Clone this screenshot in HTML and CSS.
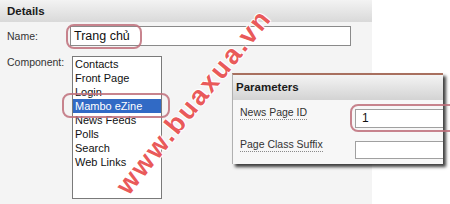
FILE: index.html
```html
<!DOCTYPE html>
<html>
<head>
<meta charset="utf-8">
<link rel="stylesheet" href="styles.css">
</head>
<body>
<div class="page">
  <section class="details">
    <div class="hdr">Details</div>
    <div class="form">
      <div class="lbl lbl-name">Name:</div>
      <div class="name-input">Trang chủ</div>
      <div class="lbl lbl-comp">Component:</div>
      <ul class="listbox">
        <li>Contacts</li>
        <li>Front Page</li>
        <li>Login</li>
        <li class="sel">Mambo eZine</li>
        <li>News Feeds</li>
        <li>Polls</li>
        <li>Search</li>
        <li>Web Links</li>
      </ul>
    </div>
  </section>

  <section class="params">
    <div class="phdr">Parameters</div>
    <div class="pbody">
      <div class="prow">
        <div class="plbl"><span>News Page ID</span></div>
        <div class="pinput tall">1</div>
      </div>
      <div class="prow">
        <div class="plbl"><span>Page Class Suffix</span></div>
        <div class="pinput"></div>
      </div>
    </div>
  </section>

  <div class="hl hl-name"></div>
  <div class="hl hl-mambo"></div>
  <div class="hl hl-param"></div>

  <div class="watermark">www.buaxua.vn</div>
</div>
</body>
</html>
```

FILE: styles.css
```css
* { box-sizing: border-box; }

html, body {
  margin: 0;
  padding: 0;
  background: #ffffff;
}

.page {
  position: relative;
  width: 450px;
  height: 204px;
  overflow: hidden;
  font-family: "Liberation Sans", Arial, sans-serif;
  color: #222;
}

.details {
  width: 372px;
  height: 204px;
  background: #f4f4f4;
}

.hdr {
  height: 22px;
  line-height: 22px;
  padding-left: 7px;
  font-size: 11.5px;
  font-weight: bold;
  color: #1a1a1a;
  background: linear-gradient(#f3f3f3, #d9d9d9);
}

.form {
  display: grid;
  grid-template-columns: 70px auto;
  row-gap: 10px;
  padding-top: 4px;
  align-items: start;
}

.lbl {
  padding-left: 7px;
  font-size: 10.5px;
  color: #333;
}

.lbl-name { line-height: 20px; }
.lbl-comp { line-height: 13px; }

.name-input {
  width: 281px;
  height: 20px;
  border: 1px solid #8a8a8a;
  background: #fff;
  font-size: 12.5px;
  line-height: 18px;
  padding-left: 3px;
  color: #111;
}

.listbox {
  list-style: none;
  margin: 0 0 0 2px;
  padding: 0;
  width: 90px;
  height: 143px;
  border: 1px solid #7a7a7a;
  background: #fff;
}

.listbox li {
  height: 14px;
  line-height: 14px;
  padding-left: 2px;
  font-size: 11px;
  color: #111;
  white-space: nowrap;
}

.listbox li.sel {
  background: #316ac5;
  color: #fff;
}

.params {
  position: absolute;
  left: 232px;
  top: 73px;
  width: 211px;
  height: 91px;
  background: #f7f7f7;
  border-top: 2px solid #a8705f;
  border-left: 1px solid #b0b0b0;
  box-shadow: 3px 3px 3px rgba(0, 0, 0, 0.75);
  overflow: hidden;
}

.phdr {
  height: 25px;
  line-height: 25px;
  padding-left: 3px;
  font-size: 11.5px;
  font-weight: bold;
  color: #1a1a1a;
  background: linear-gradient(#f4f4f4, #d3d3d3);
}

.pbody {
  padding-top: 6px;
}

.prow {
  display: grid;
  grid-template-columns: 122px 1fr;
  height: 32px;
  align-items: start;
}

.plbl {
  display: flex;
  padding-left: 7px;
}

.plbl span {
  display: block;
  font-size: 10.5px;
  line-height: 13px;
  color: #333;
  border-bottom: 1px dotted #8a8a8a;
}

.pinput {
  margin-top: 3px;
  height: 18px;
  border: 1px solid #a0a0a0;
  border-right: none;
  background: #fff;
  font-size: 12px;
  line-height: 17px;
  padding-left: 6px;
  color: #111;
}

.pinput.tall { height: 19px; }

.hl {
  position: absolute;
  border: 2px solid rgba(190, 110, 122, 0.85);
  border-radius: 8px;
}

.hl-name { left: 66px; top: 24px; width: 76px; height: 25px; }
.hl-mambo { left: 62px; top: 93px; width: 108px; height: 25px; }
.hl-param { left: 350px; top: 104px; width: 120px; height: 28px; }

.watermark {
  position: absolute;
  left: 194px;
  top: 102px;
  transform: translate(-50%, -50%) rotate(-51deg);
  font-family: "Liberation Sans", Arial, sans-serif;
  font-size: 27px;
  font-weight: bold;
  letter-spacing: 2px;
  white-space: nowrap;
  color: rgba(228, 45, 45, 0.8);
  text-shadow: 1px 0 0 #fff, -1px 0 0 #fff, 0 1px 0 #fff, 0 -1px 0 #fff, 0 0 3px rgba(255,255,255,0.9);
}
```
